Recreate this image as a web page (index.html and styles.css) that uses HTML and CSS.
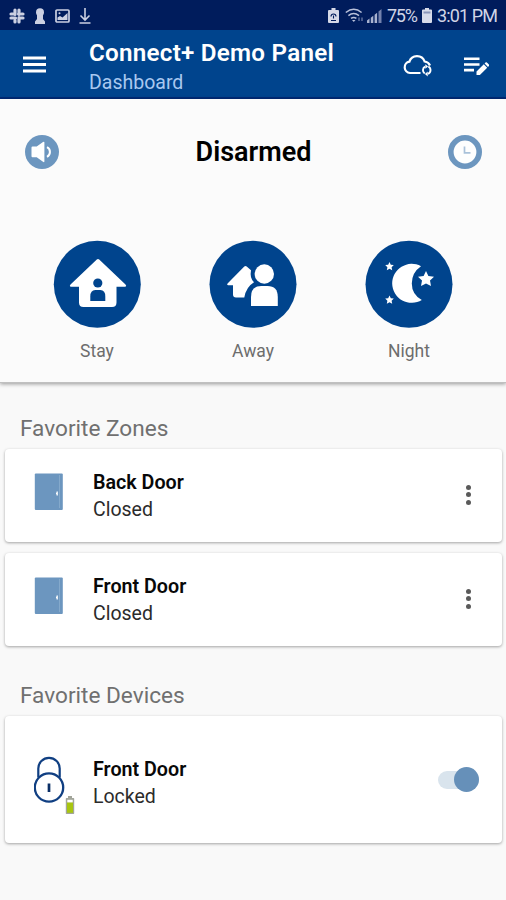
FILE: index.html
```html
<!DOCTYPE html>
<html lang="en">
<head>
  <meta charset="UTF-8">
  <title>Connect+ Demo Panel</title>
  <link rel="stylesheet" href="styles.css">
</head>
<body>
  <div class="status-bar">
    <div class="status-left">
      <svg width="16" height="16" viewBox="0 0 16 16" fill="none" stroke="#cbd0e2" stroke-width="3.200" stroke-linecap="round">
        <path d="M6 2v4.500M2 6h2M10 2v4.500M12.500 6h1.500M9.500 6h.5M2 10h4.500M6 12.500v1.500M10 9.500v4.500M10 10h4"/>
      </svg>
      <svg width="10" height="16" viewBox="0 0 10 16" fill="#cbd0e2">
        <circle cx="5" cy="4.200" r="4"/>
        <path d="M2 7h6v4l2 2.500V16H0v-2.500L2 11z"/>
      </svg>
      <svg width="15" height="14" viewBox="0 0 15 14">
        <rect x="1" y="1" width="13" height="12" rx="1" fill="none" stroke="#cbd0e2" stroke-width="1.700"/>
        <path d="M2.500 11V8.500L5 7l2.500 1.500L12.500 4v7z" fill="#cbd0e2"/>
        <circle cx="4.500" cy="4.300" r="1" fill="#cbd0e2"/>
      </svg>
      <svg width="12" height="16" viewBox="0 0 12 16" fill="none" stroke="#cbd0e2" stroke-width="1.600">
        <path d="M6 0v11.500M1.500 7.500L6 12l4.500-4.500M.5 15h11"/>
      </svg>
    </div>
    <div class="status-right">
      <svg class="saver" width="11" height="15" viewBox="0 0 11 15">
        <path d="M3.500 0h4v2H10q1 0 1 1v11q0 1-1 1H1q-1 0-1-1V3q0-1 1-1h2.500z" fill="#d5d9e8"/>
        <path d="M3 8.500a2.500 2.500 0 1 1 5 0M5.500 7.500v3M3 12.500h5" fill="none" stroke="#001c5c" stroke-width="1.100"/>
      </svg>
      <svg class="wifi" width="19" height="15" viewBox="0 0 19 15" fill="none" stroke="#b9c1da" stroke-width="1.500">
        <path d="M.8 4.500q8-6.500 15.800 0M3.400 7.600q5.300-4 10.600 0M6 10.400q2.700-2 5.400 0"/>
        <path d="M7 12h3.500L8.800 14z" fill="#b9c1da" stroke="none"/>
        <path d="M14 9.500v3.500M17 9.500v3.500" stroke="#5d6f9d"/>
      </svg>
      <svg class="signal" width="15" height="14" viewBox="0 0 15 14" fill="#a9b3d0">
        <path d="M0 11.500l2.500-2V14H0zM3.800 8.700l2.500-2V14H3.800zM7.600 5.700l2.500-2V14H7.600z"/>
        <path d="M11.500 2.500L14.500 0v14h-3z" fill="#7482ad"/>
      </svg>
      <span class="percent">75%</span>
      <svg class="battery" width="10" height="15" viewBox="0 0 10 15">
        <path d="M3 0h4v1.500h2q1 0 1 1V14q0 1-1 1H1q-1 0-1-1V2.500q0-1 1-1h2z" fill="#d8dcea"/>
        <path d="M1.500 3.500h7v2h-7z" fill="#8b96b9"/>
      </svg>
      <span class="time">3:01 PM</span>
    </div>
  </div>

  <div class="app-bar">
    <svg class="menu-icon" width="23" height="17" viewBox="0 0 23 17" fill="#fff">
      <path d="M0 .5h23v3H0zM0 7h23v3H0zM0 13.500h23v3H0z"/>
    </svg>
    <div class="titles">
      <h1>Connect+ Demo Panel</h1>
      <div class="subtitle">Dashboard</div>
    </div>
    <svg class="cloud-icon" width="30" height="24" viewBox="0 0 30 24" fill="none" stroke="#fff" stroke-width="2.200">
      <path d="M17.500 19H7a5.700 5.700 0 0 1-.6-11.300A8 8 0 0 1 21.600 7.500Q25.500 8 27 11.500"/>
      <path d="M21.700 19.500a4 4 0 0 1 .3-6.800M25.300 12.500a4 4 0 0 1-.3 7.300" stroke-width="1.900"/>
      <path d="M22.300 10.300l2.800 2.200-2.800 2.200zM24.700 17.500l-2.800 2.500 2.800 2.500z" fill="#fff" stroke="none"/>
    </svg>
    <svg class="edit-icon" width="25" height="19" viewBox="0 0 25 19" fill="#fff">
      <path d="M0 .5h15.500v2.600H0zM0 6.200h15.500v2.600H0zM0 11.800h10v2.600H0z"/>
      <path d="M12.500 14.600l7.300-7.300 3.400 3.400-7.300 7.300h-3.400zM20.600 6.500l.9-.9q.7-.7 1.400 0l2 2q.7.700 0 1.400l-.9.900z"/>
    </svg>
  </div>

  <div class="arm-panel">
    <div class="arm-header">
      <svg width="34" height="34" viewBox="0 0 34 34">
        <circle cx="17" cy="17" r="17" fill="#6c96bf"/>
        <path d="M6.500 12.500q0-1 1-1h4.200L18 7q1.400-.8 1.400.5v18.800q0 1.400-1.400.5l-6.300-4.500H7.500q-1 0-1-1z" fill="#fff"/>
        <path d="M22 12.200a5.400 5.400 0 0 1 0 9.600" fill="none" stroke="#fff" stroke-width="2"/>
      </svg>
      <h2>Disarmed</h2>
      <svg width="34" height="34" viewBox="0 0 34 34">
        <circle cx="17" cy="17" r="14.200" fill="#fdfefe" stroke="#6c96bf" stroke-width="5.600"/>
        <path d="M16.500 11.500v6.300h6" fill="none" stroke="#a9c2da" stroke-width="1.700"/>
      </svg>
    </div>
    <div class="arm-modes">
      <div class="mode">
        <svg width="88" height="88" viewBox="0 0 88 88">
          <circle cx="44.300" cy="44.300" r="43.500" fill="#00448d"/>
          <path d="M43.800 19.600q1.200-1.100 2.400 0L72.500 44.500q1.600 2-.6 2.300H63.500V62.500q0 4.500-4.500 4.500H30.500q-4.500 0-4.500-4.500V46.800H18q-2-.3-.5-2.300z" fill="#fff"/>
          <circle cx="44.800" cy="43" r="4.600" fill="#00448d"/>
          <path d="M37.300 61V56.500q0-6.500 5-6.500h5q5 0 5 6.500V61z" fill="#00448d"/>
        </svg>
        <span>Stay</span>
      </div>
      <div class="mode">
        <svg width="88" height="88" viewBox="0 0 88 88">
          <circle cx="44" cy="44.300" r="43.500" fill="#00448d"/>
          <path d="M35.300 26.500q1.200-1 2.400 0l4.300 3.700Q40.500 38 45 42.200 37 47 35.300 57.500H27q-3 0-3-3V45.300H19.300q-2-.3-.5-2z" fill="#fff"/>
          <circle cx="55.300" cy="34" r="9.700" fill="#fff"/>
          <path d="M42 66V57Q42 46 52.300 46h6.200q10.300 0 10.300 11v9z" fill="#fff"/>
        </svg>
        <span>Away</span>
      </div>
      <div class="mode">
        <svg width="88" height="88" viewBox="0 0 88 88" fill="#fff">
          <circle cx="44" cy="44.300" r="43.500" fill="#00448d"/>
          <path d="M56 26.200Q46.800 32.500 46.800 43.500t10 16.500A19.500 19.500 0 1 1 56 26.200z"/>
          <path d="M61 31l2.400 5 5.600.7-4 3.900 1 5.500-5-2.700-5 2.700 1-5.500-4-3.900 5.600-.7z"/>
          <path d="M24.500 22l1.300 2.700 3 .4-2.200 2.100.6 3-2.700-1.500-2.700 1.500.6-3-2.200-2.100 3-.4zM24.500 55.500l1.300 2.700 3 .4-2.200 2.100.6 3-2.700-1.500-2.700 1.500.6-3-2.200-2.100 3-.4z"/>
        </svg>
        <span>Night</span>
      </div>
    </div>
  </div>

  <h3>Favorite Zones</h3>
  <div class="card">
    <div class="card-icon">
      <svg class="door" width="29" height="38" viewBox="0 0 29 38">
        <rect x=".8" y=".5" width="28" height="36.500" rx="1" fill="#6c96bf"/>
        <path d="M25.500 2v33" stroke="#84a9cb" stroke-width="1"/>
        <path d="M23.200 18.500v4M22 20.500h1.200" stroke="#fff" stroke-width="1.300"/>
      </svg>
    </div>
    <div class="card-text">
      <div class="name">Back Door</div>
      <div class="state">Closed</div>
    </div>
    <div class="dots"><i></i><i></i><i></i></div>
  </div>
  <div class="card">
    <div class="card-icon">
      <svg class="door" width="29" height="38" viewBox="0 0 29 38">
        <rect x=".8" y=".5" width="28" height="36.500" rx="1" fill="#6c96bf"/>
        <path d="M25.500 2v33" stroke="#84a9cb" stroke-width="1"/>
        <path d="M23.200 18.500v4M22 20.500h1.200" stroke="#fff" stroke-width="1.300"/>
      </svg>
    </div>
    <div class="card-text">
      <div class="name">Front Door</div>
      <div class="state">Closed</div>
    </div>
    <div class="dots"><i></i><i></i><i></i></div>
  </div>

  <h3 class="devices-title">Favorite Devices</h3>
  <div class="card device">
    <div class="card-icon">
      <svg class="lock" width="42" height="60" viewBox="0 0 42 60">
        <path d="M4.300 21.500V12.500a10.700 10.700 0 0 1 21.400 0v9" fill="none" stroke="#103f82" stroke-width="2.200"/>
        <circle cx="15" cy="31.500" r="14.200" fill="#fff" stroke="#103f82" stroke-width="2.300"/>
        <path d="M15 27.500v8.500" stroke="#0b2f66" stroke-width="2.700"/>
        <path d="M34 40h4v2h1.500q.7 0 .7.700v14.600q0 .7-.7.700h-7q-.7 0-.7-.7V42.700q0-.7.7-.7H34z" fill="#a2a59a"/>
        <path d="M33.300 43.800h5.400v3h-5.400z" fill="#fff"/>
        <path d="M33 46.500h6v10.300h-6z" fill="#a8c510"/>
      </svg>
    </div>
    <div class="card-text">
      <div class="name">Front Door</div>
      <div class="state">Locked</div>
    </div>
    <div class="switch"><div class="knob"></div></div>
  </div>
</body>
</html>
```
FILE: styles.css
```css
* {
  box-sizing: border-box;
}
body {
  margin: 0;
  height: 900px;
  overflow: hidden;
  background-color: #f9f9f9;
  font-family: Roboto, "Liberation Sans", sans-serif;
  color: #080808;
}
svg {
  display: block;
  flex-shrink: 0;
}
h1, h2, h3 {
  margin: 0;
}
.status-bar {
  height: 30px;
  padding: 1px 9px 0;
  background-color: #001c5c;
  display: flex;
  justify-content: space-between;
  align-items: center;
  color: #d0d5e6;
}
.status-left {
  display: flex;
  align-items: center;
  gap: 10px;
}
.status-left svg:nth-child(3) {
  margin-right: -1px;
}
.status-right {
  display: flex;
  align-items: center;
  font-size: 18px;
}
.wifi {
  margin-left: 6px;
}
.signal {
  margin-left: 3px;
}
.percent {
  width: 30px;
  margin-left: 5px;
  letter-spacing: -1.3px;
}
.battery {
  margin-left: 5px;
}
.time {
  margin-left: 5px;
  letter-spacing: -0.9px;
}
.app-bar {
  height: 69px;
  padding: 0 17px 0 24px;
  background-color: #00448d;
  border-bottom: 2px solid #002a78;
  display: flex;
  align-items: center;
}
.titles {
  flex: 1;
  margin-left: 42px;
  padding-top: 8px;
}
h1 {
  font-size: 24.200px;
  font-weight: 600;
  line-height: 28px;
  letter-spacing: 0.25px;
  color: #fff;
}
.subtitle {
  margin-top: 3px;
  font-size: 19.500px;
  line-height: 26px;
  color: #a9c8ef;
}
.menu-icon {
  margin-left: -1px;
  margin-right: 1px;
  margin-top: 1px;
}
.cloud-icon {
  margin-top: 5px;
  margin-right: 31px;
}
.edit-icon {
  margin-top: 5px;
}
.arm-panel {
  height: 284px;
  background-color: #fbfbfb;
  border-bottom: 1px solid #c0c0c0;
  box-shadow: 0 1px 4px rgba(0, 0, 0, 0.4);
}
.arm-header {
  padding: 36px 24px 0 25px;
  display: flex;
  justify-content: space-between;
  align-items: center;
}
h2 {
  font-size: 27px;
  font-weight: 600;
  line-height: 34px;
  color: #000;
}
.arm-modes {
  margin-top: 71px;
  padding: 0 53px;
  display: flex;
  justify-content: space-between;
}
.mode {
  display: flex;
  flex-direction: column;
  align-items: center;
  gap: 13px;
  font-size: 17.500px;
  line-height: 20px;
  color: #6d6d6d;
}
h3 {
  margin: 33px 0 7px 20px;
  font-size: 22.600px;
  font-weight: 400;
  line-height: 26px;
  color: #707070;
}
.card {
  height: 93px;
  margin: 0 4px 11px 5px;
  padding-right: 32px;
  background-color: #fff;
  border-radius: 4px;
  box-shadow: 0 1px 3px rgba(0, 0, 0, 0.35);
  display: flex;
  align-items: center;
}
.card-icon {
  width: 88px;
  padding-left: 29px;
}
.door {
  margin-bottom: 7px;
}
.lock {
  margin-top: 12px;
}
.card-text {
  flex: 1;
  line-height: 27px;
}
.name {
  font-size: 19.700px;
  font-weight: 600;
}
.state {
  font-size: 19.500px;
  color: #2b2b2b;
}
.dots {
  margin-right: -1px;
  margin-bottom: 2px;
  display: flex;
  flex-direction: column;
  gap: 2.500px;
}
.dots i {
  width: 5px;
  height: 5px;
  border-radius: 50%;
  background-color: #5a5a5a;
}
.devices-title {
  margin-top: 37px;
}
.device {
  height: 127px;
  padding-right: 23px;
}
.device .card-text {
  padding-top: 6px;
}
.switch {
  width: 41px;
  height: 18px;
  border-radius: 9px;
  background-color: #d9e4ed;
  display: flex;
  align-items: center;
  justify-content: flex-end;
}
.knob {
  width: 25px;
  height: 25px;
  border-radius: 50%;
  background-color: #6690b9;
}
```
